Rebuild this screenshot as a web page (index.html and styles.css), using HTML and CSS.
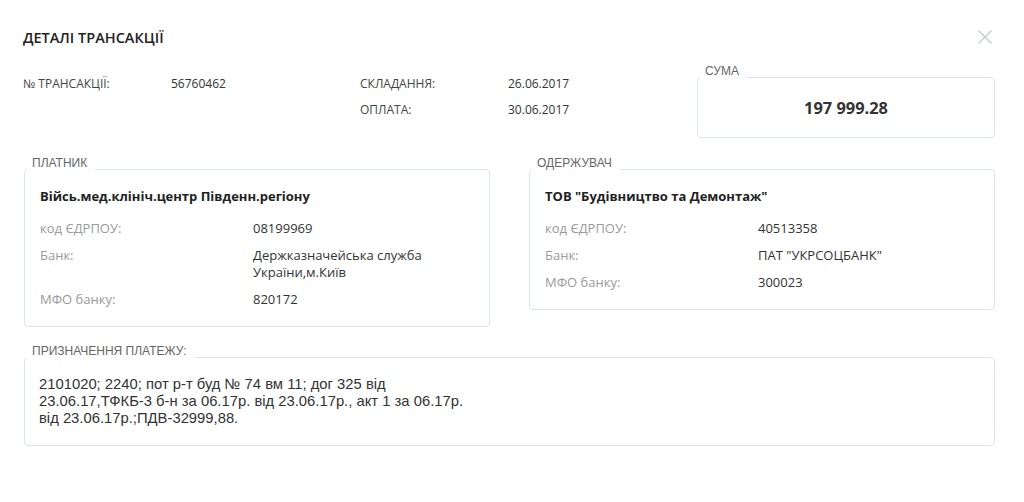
FILE: index.html
```html
<!DOCTYPE html>
<html lang="uk">
<head>
<meta charset="utf-8">
<title>Деталі трансакції</title>
<link rel="stylesheet" href="styles.css">
</head>
<body>
<div class="modal">
  <header class="head">
    <h1 class="title">ДЕТАЛІ ТРАНСАКЦІЇ</h1>
    <button class="close" aria-label="Закрити">
      <svg width="16" height="16" viewBox="0 0 16 16"><path d="M1.5 1.5L14.5 14.5M14.5 1.5L1.5 14.5" stroke="#c9cdd8" stroke-width="1.5" fill="none"/></svg>
    </button>
  </header>

  <section class="summary">
    <div class="meta">
      <div class="meta-col">
        <div class="meta-row"><span class="meta-label">№ ТРАНСАКЦІЇ:</span><span class="meta-value">56760462</span></div>
      </div>
      <div class="meta-col">
        <div class="meta-row"><span class="meta-label">СКЛАДАННЯ:</span><span class="meta-value">26.06.2017</span></div>
        <div class="meta-row"><span class="meta-label">ОПЛАТА:</span><span class="meta-value">30.06.2017</span></div>
      </div>
    </div>
    <fieldset class="box sum">
      <legend class="legend">СУМА</legend>
      <div class="amount">197 999.28</div>
    </fieldset>
  </section>

  <section class="parties">
    <fieldset class="box party">
      <legend class="legend">ПЛАТНИК</legend>
      <div class="party-name">Війсь.мед.клініч.центр Південн.регіону</div>
      <div class="party-rows">
        <span class="p-label">код ЄДРПОУ:</span><span class="p-value">08199969</span>
        <span class="p-label">Банк:</span><span class="p-value">Держказначейська служба<br>України,м.Київ</span>
        <span class="p-label">МФО банку:</span><span class="p-value">820172</span>
      </div>
    </fieldset>
    <fieldset class="box party">
      <legend class="legend">ОДЕРЖУВАЧ</legend>
      <div class="party-name">ТОВ "Будівництво та Демонтаж"</div>
      <div class="party-rows">
        <span class="p-label">код ЄДРПОУ:</span><span class="p-value">40513358</span>
        <span class="p-label">Банк:</span><span class="p-value">ПАТ "УКРСОЦБАНК"</span>
        <span class="p-label">МФО банку:</span><span class="p-value">300023</span>
      </div>
    </fieldset>
  </section>

  <fieldset class="box purpose">
    <legend class="legend">ПРИЗНАЧЕННЯ ПЛАТЕЖУ:</legend>
    <p class="purpose-text">2101020; 2240; пот р-т буд № 74 вм 11; дог 325 від<br>23.06.17,ТФКБ-3 б-н за 06.17р. від 23.06.17р., акт 1 за 06.17р.<br>від 23.06.17р.;ПДВ-32999,88.</p>
  </fieldset>
</div>
</body>
</html>
```

FILE: styles.css
```css
* { box-sizing: border-box; }

html, body {
  margin: 0;
  padding: 0;
  background: #ffffff;
}

body {
  font-family: "Open Sans", "Liberation Sans", sans-serif;
  color: #333;
}

.modal {
  width: 1024px;
  padding: 28px 29px 0 24px;
}

.head {
  display: flex;
  justify-content: space-between;
  align-items: center;
  height: 20px;
}

.title {
  margin: 0 0 0 -1px;
  font-size: 14.5px;
  line-height: 20px;
  font-weight: 600;
  color: #222;
}

.close {
  border: 0;
  background: none;
  padding: 0;
  width: 16px;
  height: 16px;
  margin-right: 2px;
  margin-top: -2px;
  display: flex;
  cursor: pointer;
}

.summary {
  margin-top: 16px;
  display: flex;
  justify-content: space-between;
  align-items: flex-start;
}

.meta {
  display: flex;
  margin-top: 12px;
  margin-left: -1px;
}

.meta-col {
  width: 337px;
  display: flex;
  flex-direction: column;
  gap: 10px;
}

.meta-row {
  display: flex;
  font-size: 12px;
  line-height: 16px;
}

.meta-label {
  width: 148px;
  font-weight: 400;
  color: #444;
}

.meta-value {
  color: #333;
}

.box {
  margin: 0;
  border: 1px solid #dce4f2;
  border-radius: 4px;
  padding: 0 15px;
  min-width: 0;
}

.legend {
  font-family: "Liberation Sans", Arial, sans-serif;
  font-size: 12px;
  line-height: 14px;
  color: #666;
  padding: 0 8px 12px 5px;
  margin-left: -13px;
}

.sum {
  width: 298px;
  padding-top: 8px;
  padding-bottom: 19px;
}

.amount {
  text-align: center;
  font-size: 16.4px;
  line-height: 20px;
  font-weight: 700;
  color: #333;
}

.parties {
  margin-top: 18px;
  display: grid;
  grid-template-columns: 466px 466px;
  column-gap: 39px;
  align-items: start;
}

.party {
  padding-top: 6px;
  padding-bottom: 18px;
}

.party-name {
  font-size: 13px;
  line-height: 17px;
  font-weight: 700;
  color: #222;
}

.party-rows {
  margin-top: 15px;
  display: grid;
  grid-template-columns: 213px 1fr;
  row-gap: 10px;
  font-size: 13px;
  line-height: 17px;
}

.p-label {
  color: #9a9a9a;
}

.p-value {
  color: #333;
}

.purpose {
  margin-top: 17px;
  padding-top: 6px;
  padding-bottom: 18px;
}

.purpose-text {
  margin: 0 0 0 -1px;
  font-family: "Liberation Sans", Arial, sans-serif;
  font-size: 14.8px;
  line-height: 17px;
  color: #333;
}
```
